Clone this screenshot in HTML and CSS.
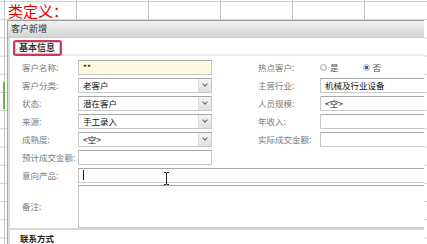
FILE: index.html
```html
<!DOCTYPE html>
<html lang="zh-CN">
<head>
    <meta charset="UTF-8">
    <title>类定义</title>
    <link rel="stylesheet" href="styles.css">
</head>
<body>
    <div class="sheet">
        <div class="sheet-title">类定义：</div>
        <div class="row-mark"></div>

        <div class="dialog">
            <div class="dialog-title">客户新增</div>
            <div class="tabs"><span class="tab">基本信息</span></div>

            <div class="form">
                <label>客户名称:</label>
                <div class="field input yellow">**</div>
                <label class="right">热点客户:</label>
                <div class="field radios">
                    <span class="radio"></span><span class="opt">是</span>
                    <span class="radio on"></span><span class="opt">否</span>
                </div>

                <label>客户分类:</label>
                <div class="field select">老客户<span class="arrow"></span></div>
                <label class="right">主营行业:</label>
                <div class="field input">机械及行业设备</div>

                <label>状态:</label>
                <div class="field select">潜在客户<span class="arrow"></span></div>
                <label class="right">人员规模:</label>
                <div class="field input">&lt;空&gt;</div>

                <label>来源:</label>
                <div class="field select">手工录入<span class="arrow"></span></div>
                <label class="right">年收入:</label>
                <div class="field input"></div>

                <label>成熟度:</label>
                <div class="field select">&lt;空&gt;<span class="arrow"></span></div>
                <label class="right">实际成交金额:</label>
                <div class="field input"></div>

                <label>预计成交金额:</label>
                <div class="field input"></div>
                <span></span><span></span>

                <label>意向产品:</label>
                <div class="field input wide"><span class="caret"></span></div>

                <label>备注:</label>
                <div class="field textarea wide"></div>
            </div>

            <div class="section">联系方式</div>

            <svg class="ibeam" width="7" height="13" viewBox="0 0 7 13">
                <path d="M1 0.5h2l0.5 0.5l0.5-0.5h2M3.5 1v11M1 12.5h2l0.5-0.5l0.5 0.5h2" fill="none" stroke="#222" stroke-width="1"/>
            </svg>
        </div>
    </div>
</body>
</html>
```

FILE: styles.css
```css
body {
    margin: 0;
    font-family: "Noto Sans CJK SC", "Noto Sans", sans-serif;
    overflow: hidden;
}
.sheet {
    position: relative;
    width: 427px;
    height: 244px;
    background-color: #fff;
    background-image:
        linear-gradient(to right, #c4c4c4 1px, transparent 1px),
        linear-gradient(to bottom, #d0d0d0 1px, transparent 1px);
    background-size: 72px 18.2px;
    background-position: 4px 1px;
    overflow: hidden;
}
.sheet-title {
    padding: 2px 0 0 8px;
    height: 18px;
    font-size: 15px;
    line-height: 17px;
    color: #e60000;
}
.row-mark {
    position: absolute;
    left: 3px;
    top: 82px;
    width: 2px;
    height: 27px;
    background: #6db64c;
}
.dialog {
    position: absolute;
    left: 7px;
    top: 20px;
    width: 416px;
    height: 224px;
    background: #fff;
    border-left: 1px solid #a8a8a8;
    box-shadow: inset 2px 0 0 #dcdcdc;
    overflow: hidden;
}
.dialog-title {
    height: 16px;
    padding-left: 3px;
    border-top: 1px solid #999;
    border-bottom: 1px solid #ccc;
    background: linear-gradient(to bottom, #f2f2f2, #e2e2e2 50%, #d6d6d6);
    font-size: 9px;
    line-height: 16px;
    color: #333;
}
.tabs {
    display: flex;
    align-items: flex-end;
    height: 16px;
    margin-left: 5px;
    border-bottom: 2px solid #ececec;
    margin-bottom: 2px;
}
.tab {
    display: block;
    width: 41px;
    height: 12px;
    margin-bottom: -2px;
    padding-left: 4px;
    border: 2px solid #c93a5e;
    border-radius: 3px;
    background: #fafafa;
    box-shadow: inset 0 0 0 1px #ccc;
    font-size: 9px;
    font-weight: bold;
    line-height: 12px;
    color: #333;
}
.form {
    display: grid;
    grid-template-columns: 56px 134px 108px 1fr;
    grid-template-rows: repeat(7, 18px) 44px;
    align-items: center;
    padding-left: 14px;
}
.form label {
    font-size: 8.5px;
    color: #7a7a7a;
    white-space: nowrap;
}
.form label.right {
    padding-left: 46px;
}
.field {
    position: relative;
    box-sizing: border-box;
    height: 15px;
    padding-left: 4px;
    font-size: 8.5px;
    line-height: 13px;
    color: #111;
    white-space: nowrap;
}
.input, .select, .textarea {
    border: 1px solid #c8c8c8;
    border-top-color: #a8a8a8;
    background: #fff;
}
.right + .input {
    margin-right: -4px;
}
.yellow {
    background: #fdf8df;
}
.select .arrow {
    position: absolute;
    right: 0;
    top: 0;
    width: 12px;
    height: 13px;
    border-left: 1px solid #ddd;
    background: linear-gradient(to bottom, #f4f4f4, #e0e0e0);
}
.select .arrow::after {
    content: "";
    position: absolute;
    left: 4px;
    top: 3px;
    width: 3px;
    height: 3px;
    border-right: 1px solid #666;
    border-bottom: 1px solid #666;
    transform: rotate(45deg);
}
.radios {
    display: flex;
    align-items: center;
    padding-left: 0;
    color: #555;
}
.radio {
    box-sizing: border-box;
    width: 7px;
    height: 7px;
    border: 1px solid #aaa;
    border-radius: 50%;
    background: #f4f4f4;
}
.radio.on {
    background: radial-gradient(circle, #2e5fb8 1.5px, #e8eef8 2px);
}
.opt {
    margin: 0 24px 0 3px;
}
.wide {
    grid-column: 2 / 5;
    margin-right: -4px;
}
.textarea {
    height: 43px;
}
.caret {
    display: block;
    width: 1px;
    height: 10px;
    margin-top: 1px;
    background: #111;
}
.section {
    height: 11px;
    padding: 3px 0 0 12px;
    border-top: 2px solid #d8d8d8;
    font-size: 8.5px;
    font-weight: bold;
    line-height: 10px;
    color: #222;
}
.ibeam {
    position: absolute;
    left: 155px;
    top: 152px;
}
```
